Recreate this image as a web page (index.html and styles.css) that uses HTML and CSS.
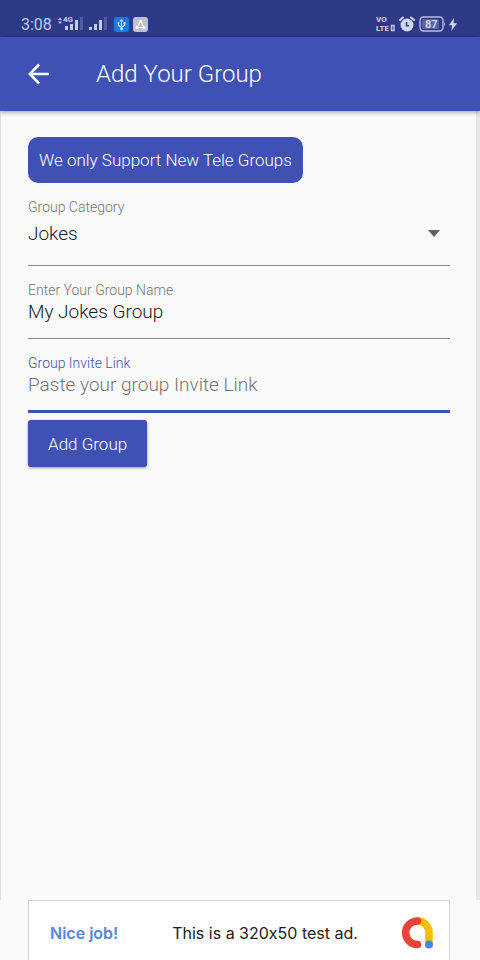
FILE: index.html
```html
<!DOCTYPE html>
<html lang="en">
<head>
<meta charset="utf-8">
<meta name="viewport" content="width=device-width, initial-scale=1">
<title>Add Your Group</title>
<link rel="stylesheet" href="styles.css">
</head>
<body>
<div class="status">
  <div class="status-group">
    <span class="clock">3:08</span>
    <svg class="signals" width="52" height="18" viewBox="0 0 52 18" aria-hidden="true">
      <path d="M2 5l2-2.500L6 5zM2 6.500l2 2.500 2-2.500z" fill="#c3caf0"/>
      <g fill="#c3caf0">
        <path d="M9 11h3v4H9zM14 9h3v6h-3zM19 5h3v10h-3z"/>
        <path d="M33 12h3v3h-3zM38 9h3v6h-3zM43 5h3v10h-3z"/>
      </g>
      <path d="M24 2h3v13h-3zM48 2h3v13h-3z" fill="#4f5ba2"/>
      <text x="7" y="7" class="network">4G</text>
    </svg>
    <svg class="badge" width="15" height="15" viewBox="0 0 15 15" aria-hidden="true">
      <rect width="15" height="15" rx="3" fill="#147ce5"/>
      <path d="M7.500 3v9M4.500 6v2.500l3 2 3-2V6" fill="none" stroke="#d7eaff" stroke-width="1.200"/>
      <path d="M5.800 4.500L7.500 2l1.700 2.500z" fill="#d7eaff"/>
      <circle cx="7.500" cy="12" r="1.300" fill="#d7eaff"/>
      <circle cx="4.500" cy="6" r="1" fill="#d7eaff"/>
      <path d="M9.600 5h1.900v2H9.600z" fill="#d7eaff"/>
    </svg>
    <svg class="badge" width="15" height="15" viewBox="0 0 15 15" aria-hidden="true">
      <rect width="15" height="15" rx="3" fill="#bfc2cd"/>
      <path d="M7.500 4L4 10.500h7z" fill="none" stroke="#fff" stroke-width="1"/>
      <g fill="#fff"><circle cx="7.500" cy="4.500" r="1.600"/><circle cx="4" cy="10.500" r="1.600"/><circle cx="11" cy="10.500" r="1.600"/></g>
    </svg>
  </div>
  <div class="status-group">
    <svg width="19" height="18" viewBox="0 0 19 18" aria-hidden="true">
      <text x="0" y="7" class="volte">VO</text>
      <text x="0" y="16" class="volte">LTE</text>
      <path d="M15.500 10.500h2.500v5h-2.500z" fill="none" stroke="#c3caf0" stroke-width="1.400"/>
    </svg>
    <svg class="alarm" width="16" height="17" viewBox="0 0 16 17" aria-hidden="true">
      <circle cx="8" cy="9" r="6.500" fill="#d1d6f4"/>
      <path d="M1 4L4 1.500M12 1.500L15 4" stroke="#d1d6f4" stroke-width="2" stroke-linecap="round"/>
      <path d="M7.500 6v3.700H10" fill="none" stroke="#2e3a87" stroke-width="1.500"/>
    </svg>
    <svg class="battery" width="27" height="16" viewBox="0 0 27 16" aria-hidden="true">
      <rect x="1" y="1" width="23" height="14" rx="3.500" fill="none" stroke="#b5bce5" stroke-width="1.400"/>
      <rect x="3" y="3" width="17" height="10" rx="1.500" fill="#5661aa"/>
      <path d="M25 6q2 2 0 4z" fill="#b5bce5"/>
      <text x="6" y="12" class="charge">87</text>
    </svg>
    <svg class="bolt" width="8" height="13" viewBox="0 0 8 13" aria-hidden="true"><path d="M5 0L0 7.200h3.200L2.400 13 8 5.200H4.500z" fill="#d1d6f4"/></svg>
  </div>
</div>
<header class="appbar">
  <button class="back" type="button" aria-label="Back">
    <svg width="22" height="22" viewBox="0 0 22 22" aria-hidden="true"><path d="M21 11H2M11.200 1.500L1.700 11l9.500 9.500" fill="none" stroke="#fff" stroke-width="2.500"/></svg>
  </button>
  <h1>Add Your Group</h1>
</header>
<main>
  <p class="notice">We only Support New Tele Groups</p>
  <form>
    <div class="field category">
      <label for="category">Group Category</label>
      <div class="select-row">
        <select id="category"><option>Jokes</option></select>
        <svg class="caret" width="12" height="7" viewBox="0 0 12 7" aria-hidden="true"><path d="M0 0h12L6 7z" fill="#616161"/></svg>
      </div>
    </div>
    <div class="field">
      <label for="name">Enter Your Group Name</label>
      <input id="name" type="text" value="My Jokes Group">
    </div>
    <div class="field active">
      <label for="link">Group Invite Link</label>
      <input id="link" type="text" placeholder="Paste your group Invite Link">
    </div>
    <button class="submit" type="button">Add Group</button>
  </form>
</main>
<footer>
  <div class="ad">
    <span class="ad-lead">Nice job!</span>
    <span class="ad-text">This is a 320x50 test ad.</span>
    <svg class="ad-logo" width="34" height="34" viewBox="0 0 34 34" aria-hidden="true">
      <path d="M17.500 5A11.500 11.500 0 0 1 29 16.500V28" fill="none" stroke="#fbbc04" stroke-width="7.500"/>
      <path d="M17.500 5a11.800 11.800 0 0 0 0 23.600" fill="none" stroke="#e94335" stroke-width="7.500" stroke-linecap="round"/>
      <circle cx="29" cy="28.500" r="4" fill="#4285f4"/>
    </svg>
  </div>
</footer>
</body>
</html>
```
FILE: styles.css
```css
* { box-sizing: border-box; }

body {
  margin: 0;
  min-height: 100vh;
  display: flex;
  flex-direction: column;
  overflow: hidden;
  background: #fafafa;
  font-family: Roboto, "Liberation Sans", sans-serif;
  font-weight: 300;
  color: #212121;
}

.status {
  height: 37px;
  padding: 10px 23px 0 21px;
  display: flex;
  justify-content: space-between;
  background: #2e3a87;
  color: #c3caf0;
}

.status-group {
  height: 28px;
  display: flex;
  align-items: center;
}

.clock { font-size: 16px; font-weight: 400; }
.signals { margin-left: 4px; }
.badge { margin-left: 4px; }
.signals + .badge { margin-left: 6px; }
.alarm { margin-left: 4px; }
.battery { margin-left: 4px; }
.bolt { margin-left: 3px; }
.network { font-size: 8px; font-weight: 700; fill: #c3caf0; }
.volte { font-size: 8px; font-weight: 700; fill: #d1d6f4; }
.charge { font-size: 11px; font-weight: 700; fill: #d1d6f4; }

.appbar {
  height: 74px;
  padding: 0 28px;
  display: flex;
  align-items: center;
  gap: 46px;
  background: #3f51b5;
  color: #fff;
  box-shadow: 0 1px 5px rgba(0, 0, 0, 0.4);
  z-index: 1;
}

.back {
  display: flex;
  padding: 0;
  border: 0;
  background: none;
}

h1 { margin: 0; font-size: 24px; font-weight: 300; }

main {
  flex: 1;
  padding: 26px 26px 0 27px;
  border-left: 1px solid #e0e0e0;
  border-right: 4px solid #e8e8e8;
}

.notice {
  width: fit-content;
  margin: 0 0 14px;
  padding: 12px 11px;
  border-radius: 10px;
  background: #3f51b5;
  color: #fff;
  font-size: 17px;
  line-height: 22px;
}

.field {
  height: 73px;
  padding-top: 14px;
  display: flex;
  flex-direction: column;
  border-bottom: 1px solid #8a8a8a;
}

.category { height: 69px; padding-top: 0; }
.active { height: 74px; border-bottom: 3px solid #3f51b5; }

label { font-size: 14px; line-height: 20px; color: #757575; }
.active label { color: #3f51b5; }

.select-row {
  display: flex;
  align-items: center;
  padding: 4px 10px 0 0;
}

.caret { margin-left: -12px; pointer-events: none; }

select, input {
  width: 100%;
  height: 24px;
  margin: 0;
  padding: 0;
  border: 0;
  outline: 0;
  appearance: none;
  background: none;
  color: #212121;
  font: inherit;
  font-size: 19px;
}

input { height: 22px; }
input::placeholder { color: #757575; opacity: 1; }

.submit {
  margin-top: 7px;
  height: 47px;
  padding: 0 20px;
  border: 0;
  border-radius: 3px;
  background: #3f51b5;
  color: #fff;
  font: inherit;
  font-size: 17px;
  box-shadow: 0 1px 3px rgba(0, 0, 0, 0.4);
}

footer { padding: 0 30px 0 28px; }

.ad {
  height: 60px;
  padding: 5px 15px 0 21px;
  display: flex;
  align-items: center;
  border: 1px solid #cfd8dc;
  border-bottom: 0;
  background: #fff;
  font-family: Inter, Roboto, sans-serif;
  font-size: 16px;
  font-feature-settings: "calt" 0;
}

.ad-lead { color: #5585dc; font-weight: 600; }
.ad-text { margin: 0 auto 0 54px; font-weight: 400; }
```
